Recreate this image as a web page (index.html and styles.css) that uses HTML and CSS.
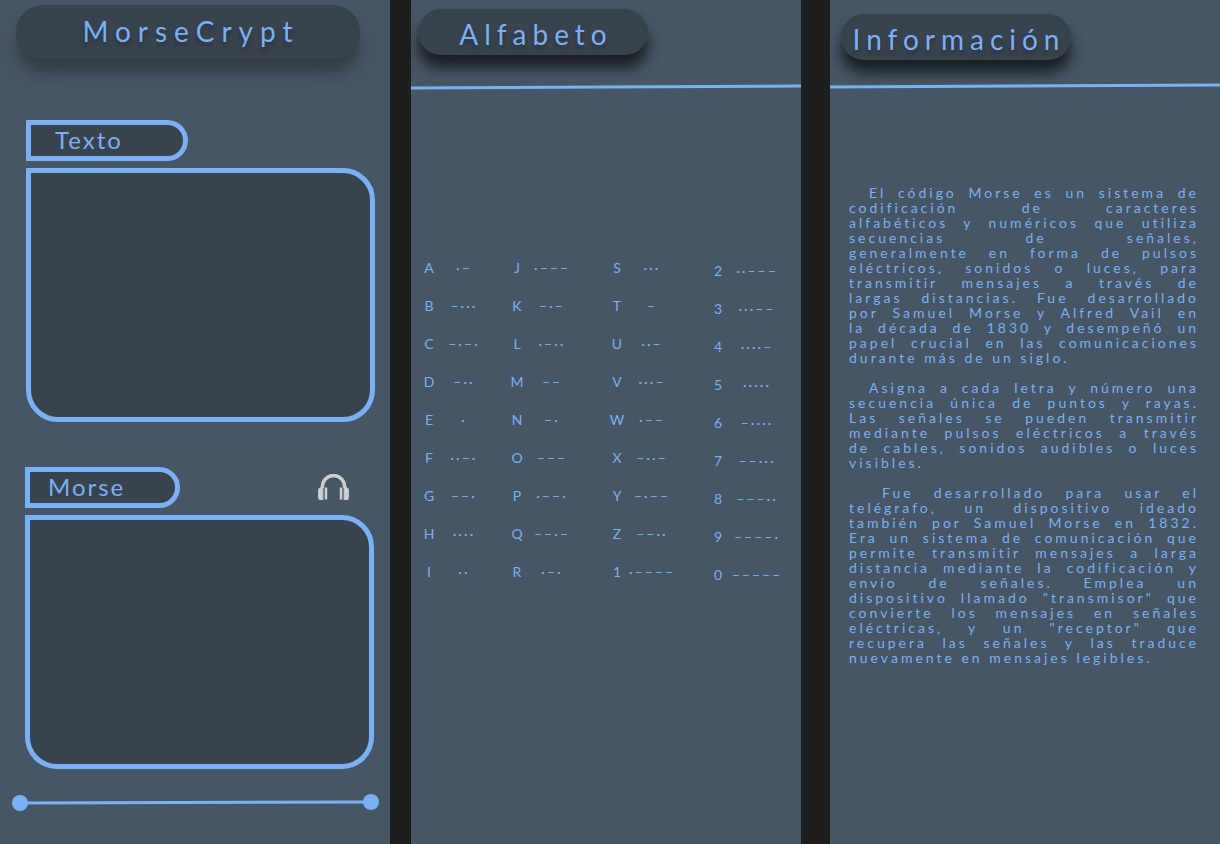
FILE: index.html
```html
<!DOCTYPE html>
<html lang="es">
<head>
<meta charset="utf-8">
<title>MorseCrypt</title>
<link rel="stylesheet" href="styles.css">
</head>
<body>
<main class="screens">
  <section class="screen home">
    <h1 class="title title-wide">MorseCrypt</h1>
    <div class="field field-text">
      <div class="field-head"><label class="tag" for="texto">Texto</label></div>
      <textarea class="area" id="texto"></textarea>
    </div>
    <div class="field field-morse">
      <div class="field-head">
        <label class="tag" for="morse">Morse</label>
        <button class="listen" type="button" aria-label="Escuchar">
          <svg width="31" height="27" viewBox="0 0 32 28">
            <path d="M4.500 15V13a11.500 11.500 0 0 1 23 0v2" fill="none" stroke="#cfcfcf" stroke-width="3.500"/>
            <path d="M5 13v14H3a3 3 0 0 1-3-3v-7a3 3 0 0 1 2-3l1-1zM27 13v14h2a3 3 0 0 0 3-3v-7a3 3 0 0 0-2-3l-1-1zM7 14h2.500v12.500H7zM22.500 14H25v12.500h-2.500z" fill="#cfcfcf"/>
            <path d="M6 14v13M26 14v13" stroke="#8f979e" stroke-width="1"/>
          </svg>
        </button>
      </div>
      <textarea class="area" id="morse"></textarea>
    </div>
    <svg class="track" viewBox="0 0 367 17" aria-hidden="true">
      <path d="M8 9L359 8" stroke="#7ab0f4" stroke-width="3"/>
      <circle cx="8" cy="9" r="8" fill="#7ab0f4"/>
      <circle cx="359" cy="8" r="8" fill="#7ab0f4"/>
    </svg>
  </section>

  <section class="screen alphabet">
    <h2 class="title">Alfabeto</h2>
    <svg class="rule" viewBox="0 0 390 6" preserveAspectRatio="none" aria-hidden="true"><path d="M0 4L390 2" stroke="#7ab0f4" stroke-width="3"/></svg>
    <div class="tables">
      <table class="codes">
        <tr><th>A</th><td>·–</td></tr>
        <tr><th>B</th><td>–···</td></tr>
        <tr><th>C</th><td>–·–·</td></tr>
        <tr><th>D</th><td>–··</td></tr>
        <tr><th>E</th><td>·</td></tr>
        <tr><th>F</th><td>··–·</td></tr>
        <tr><th>G</th><td>––·</td></tr>
        <tr><th>H</th><td>····</td></tr>
        <tr><th>I</th><td>··</td></tr>
      </table>
      <table class="codes">
        <tr><th>J</th><td>·–––</td></tr>
        <tr><th>K</th><td>–·–</td></tr>
        <tr><th>L</th><td>·–··</td></tr>
        <tr><th>M</th><td>––</td></tr>
        <tr><th>N</th><td>–·</td></tr>
        <tr><th>O</th><td>–––</td></tr>
        <tr><th>P</th><td>·––·</td></tr>
        <tr><th>Q</th><td>––·–</td></tr>
        <tr><th>R</th><td>·–·</td></tr>
      </table>
      <table class="codes codes-apart">
        <tr><th>S</th><td>···</td></tr>
        <tr><th>T</th><td>–</td></tr>
        <tr><th>U</th><td>··–</td></tr>
        <tr><th>V</th><td>···–</td></tr>
        <tr><th>W</th><td>·––</td></tr>
        <tr><th>X</th><td>–··–</td></tr>
        <tr><th>Y</th><td>–·––</td></tr>
        <tr><th>Z</th><td>––··</td></tr>
        <tr><th>1</th><td>·––––</td></tr>
      </table>
      <table class="codes codes-apart codes-digits">
        <tr><th>2</th><td>··–––</td></tr>
        <tr><th>3</th><td>···––</td></tr>
        <tr><th>4</th><td>····–</td></tr>
        <tr><th>5</th><td>·····</td></tr>
        <tr><th>6</th><td>–····</td></tr>
        <tr><th>7</th><td>––···</td></tr>
        <tr><th>8</th><td>–––··</td></tr>
        <tr><th>9</th><td>––––·</td></tr>
        <tr><th>0</th><td>–––––</td></tr>
      </table>
    </div>
  </section>

  <section class="screen info">
    <h2 class="title">Información</h2>
    <svg class="rule" viewBox="0 0 390 6" preserveAspectRatio="none" aria-hidden="true"><path d="M0 4L390 2" stroke="#7ab0f4" stroke-width="3"/></svg>
    <article class="prose">
      <p>El código Morse es un sistema de<br>codificación de caracteres<br>alfabéticos y numéricos que utiliza<br>secuencias de señales,<br>generalmente en forma de pulsos<br>eléctricos, sonidos o luces, para<br>transmitir mensajes a través de<br>largas distancias. Fue desarrollado<br>por Samuel Morse y Alfred Vail en<br>la década de 1830 y desempeñó un<br>papel crucial en las comunicaciones<br><span class="end">durante más de un siglo.</span></p>
      <p>Asigna a cada letra y número una<br>secuencia única de puntos y rayas.<br>Las señales se pueden transmitir<br>mediante pulsos eléctricos a través<br>de cables, sonidos audibles o luces<br><span class="end">visibles.</span></p>
      <p class="deep">Fue desarrollado para usar el<br>telégrafo, un dispositivo ideado<br>también por Samuel Morse en 1832.<br>Era un sistema de comunicación que<br>permite transmitir mensajes a larga<br>distancia mediante la codificación y<br>envío de señales. Emplea un<br>dispositivo llamado "transmisor" que<br>convierte los mensajes en señales<br>eléctricas, y un "receptor" que<br>recupera las señales y las traduce<br><span class="end">nuevamente en mensajes legibles.</span></p>
    </article>
  </section>
</main>
</body>
</html>
```
FILE: styles.css
```css
* { box-sizing: border-box; }

body {
  margin: 0;
  background: #1e1e1e;
  color: #7ab0f4;
  font-family: Lato, "Open Sans", sans-serif;
}

.screens { display: flex; min-height: 100vh; }

.screen {
  flex: 1;
  min-width: 0;
  background: #475664;
}
.alphabet { margin-left: 21px; }
.info { margin-left: 29px; }

.title {
  width: 230px;
  height: 46px;
  margin: 0;
  border-radius: 23px;
  background: #39434e;
  box-shadow: 0 13px 14px #1b1f25;
  font-size: 28px;
  font-weight: 400;
  line-height: 50px;
  letter-spacing: 6px;
  text-indent: 6px;
  text-align: center;
  white-space: nowrap;
  text-shadow: 0 4px 4px rgba(0, 0, 0, .25);
}
.title-wide {
  width: auto;
  height: 54px;
  margin: 0 30px 0 16px;
  border-radius: 27px;
  box-shadow: 0 14px 16px #343d47;
  line-height: 52px;
  letter-spacing: 7px;
}

.home { padding-top: 5px; }
.alphabet { padding-top: 9px; }
.info { padding-top: 14px; }
.alphabet .title { margin-left: 7px; }
.info .title { margin-left: 11px; }

.field { display: flex; flex-direction: column; gap: 7px; }
.field-text { margin-top: 61px; padding: 0 15px 0 26px; }
.field-morse { margin-top: 45px; padding: 0 16px 0 25px; }
.field-head {
  display: flex;
  justify-content: space-between;
  align-items: center;
}

.tag {
  width: 162px;
  height: 41px;
  padding-left: 24px;
  border: 5px solid #7ab0f4;
  border-radius: 0 21px 21px 0;
  background: #39434e;
  font-size: 24px;
  line-height: 30px;
  letter-spacing: 2px;
}
.field-morse .tag { width: 155px; padding-left: 18px; }

.area {
  display: block;
  width: 100%;
  height: 254px;
  padding: 16px;
  border: 5px solid #7ab0f4;
  border-radius: 0 32px 32px 32px;
  background: #39434e;
  color: inherit;
  font: inherit;
  resize: none;
}

.listen {
  display: flex;
  margin-right: 25px;
  padding: 0;
  border: 0;
  background: none;
}

.track {
  display: block;
  width: calc(100% - 23px);
  margin: 25px 11px 0 12px;
}

.rule { display: block; width: 100%; height: 6px; }
.alphabet .rule { margin-top: 29px; }
.info .rule { margin-top: 23px; }

.tables {
  display: flex;
  align-items: flex-start;
  margin-top: 159px;
  padding-left: 8px;
}
.codes {
  width: 70px;
  table-layout: fixed;
  border-collapse: collapse;
  font-size: 14px;
  line-height: 38px;
}
.codes + .codes { margin-left: 18px; }
.codes + .codes-apart { margin-left: 30px; }
.codes + .codes-digits { width: 78px; margin-left: 31px; }
.codes-digits { margin-top: 3px; }
.codes th {
  width: 20px;
  padding: 0;
  font-weight: 400;
  text-align: center;
}
.codes td {
  padding: 0;
  letter-spacing: 2px;
  text-align: center;
  white-space: nowrap;
}

.prose {
  display: flex;
  flex-direction: column;
  gap: 15px;
  margin-top: 96px;
  padding: 0 21px 0 19px;
  font-size: 14px;
  line-height: 15px;
  letter-spacing: 3px;
}
.prose p {
  margin: 0;
  text-indent: 20px;
  text-align: justify;
  text-align-last: justify;
}
.prose .deep { text-indent: 33px; }
.end { display: block; text-indent: 0; text-align-last: left; }
```
